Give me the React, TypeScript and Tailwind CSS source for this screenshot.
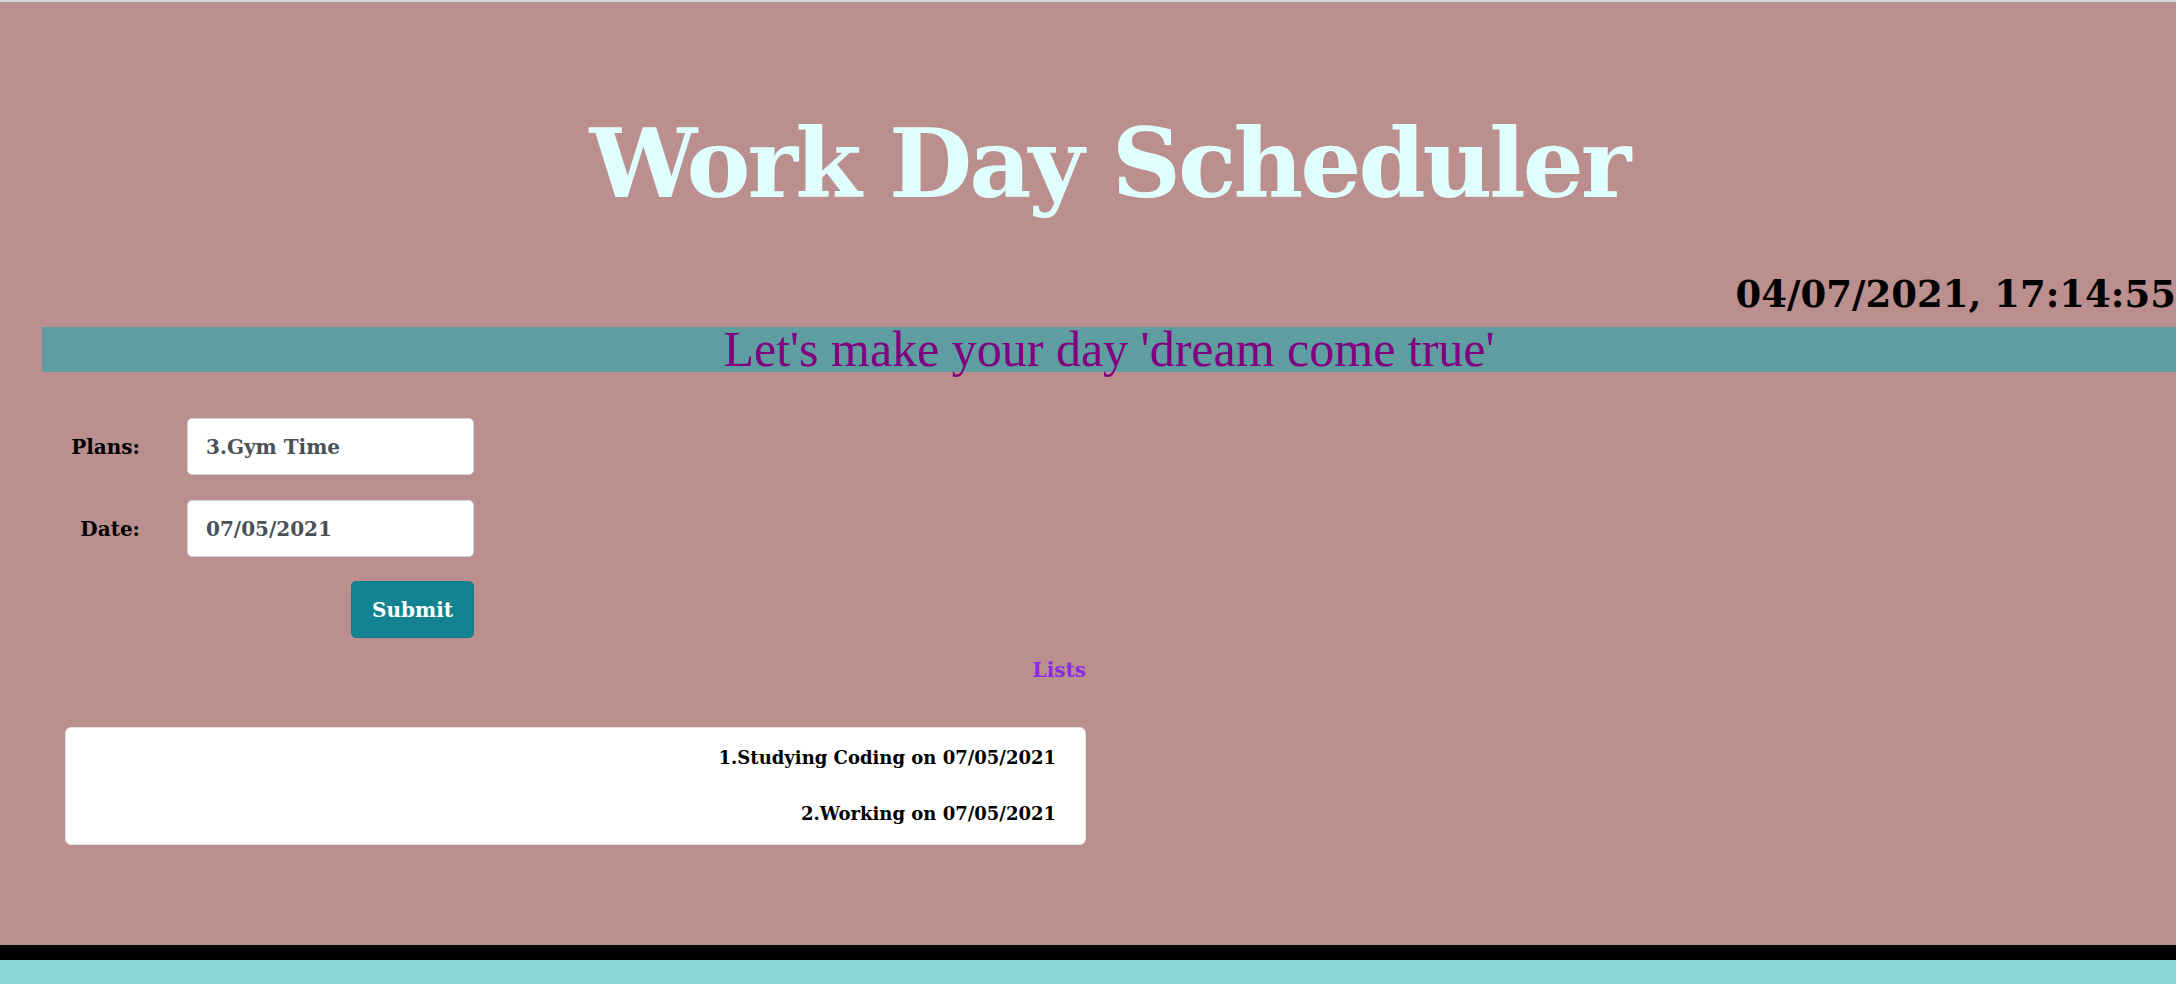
export default function App() {
  return (
    <div className="flex min-h-screen flex-col overflow-hidden border-t-2 border-[#d4d4d8] bg-[#bc8f8f] font-['DejaVu_Serif',serif]">
      <div className="pl-[42px]">
        <h1 className="mt-[114px] text-center text-[96px] leading-none font-bold tracking-[-3px] text-[#e0ffff]">
          Work Day Scheduler
        </h1>
        <div className="mt-[64px] text-right text-[37px] leading-none font-bold whitespace-nowrap text-black">
          04/07/2021, 17:14:55
        </div>
        <div className="mt-[14px] h-[45px] bg-[#5f9ea0] text-center font-['Liberation_Serif',serif] text-[50px] leading-[45px] whitespace-nowrap text-[#800080]">
          Let's make your day 'dream come true'
        </div>

        <form className="mt-[46px] flex flex-col gap-[25px]" onSubmit={(e) => e.preventDefault()}>
          <div className="flex items-center gap-[47px]">
            <label className="w-[98px] text-right text-[20px] font-bold text-black">Plans:</label>
            <input
              className="h-[57px] w-[287px] rounded-[5px] border border-[#ced4da] bg-white px-[18px] text-[20px] font-bold text-[#495057] outline-none"
              defaultValue="3.Gym Time"
            />
          </div>
          <div className="flex items-center gap-[47px]">
            <label className="w-[98px] text-right text-[20px] font-bold text-black">Date:</label>
            <input
              className="h-[57px] w-[287px] rounded-[5px] border border-[#ced4da] bg-white px-[18px] text-[20px] font-bold text-[#495057] outline-none"
              defaultValue="07/05/2021"
            />
          </div>
          <div className="-mt-px pl-[309px]">
            <button className="h-[57px] w-[123px] rounded-[5px] border border-[#117a8b] bg-[#138391] text-[20px] font-bold text-white">
              Submit
            </button>
          </div>
        </form>

        <div className="ml-[23px] w-[1021px]">
          <div className="mt-[22px] text-right text-[20px] leading-none font-bold text-[#8a2be2]">Lists</div>
          <ul className="mt-[47px] flex h-[118px] flex-col gap-[38px] rounded-[6px] border border-[#e2e2e2] bg-white pt-[21px] pr-[29px] text-right text-[18px] leading-none font-bold text-black">
            <li>1.Studying Coding on 07/05/2021</li>
            <li>2.Working on 07/05/2021</li>
          </ul>
        </div>
      </div>

      <footer className="mt-auto h-[39px] border-t-[15px] border-black bg-[#88d8d8]" />
    </div>
  );
}
